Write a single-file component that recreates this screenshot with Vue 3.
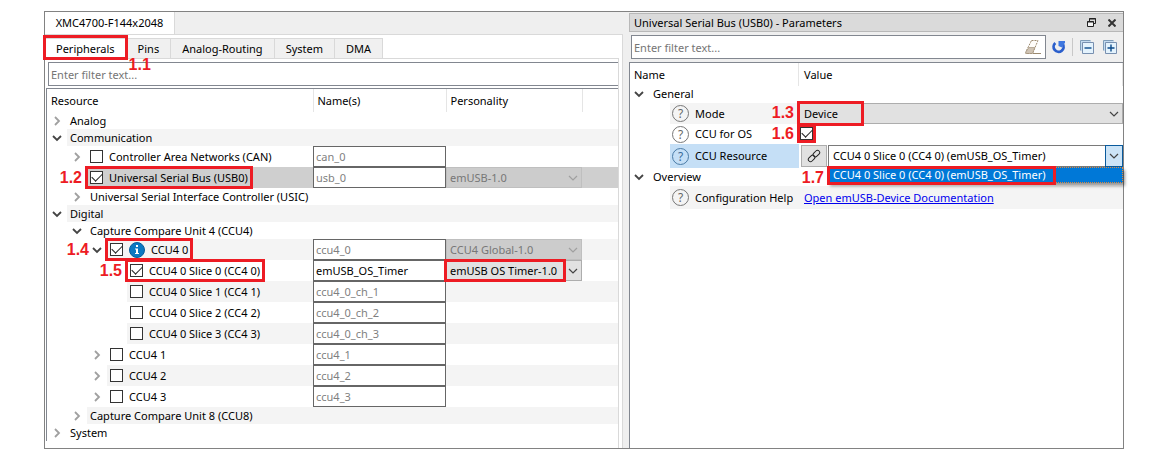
<script setup>
import { reactive } from 'vue'

const tabs = ['Peripherals', 'Pins', 'Analog-Routing', 'System', 'DMA']

const rows = reactive([
  { id: 'analog', label: 'Analog', level: 0, arrow: 'right' },
  { id: 'comm', label: 'Communication', level: 0, arrow: 'down' },
  { id: 'can', label: 'Controller Area Networks (CAN)', level: 1, arrow: 'right', check: true, on: false, name: 'can_0' },
  { id: 'usb', label: 'Universal Serial Bus (USB0)', level: 1, check: true, on: true, name: 'usb_0', personality: 'emUSB-1.0', selected: true, mark: '1.2' },
  { id: 'usic', label: 'Universal Serial Interface Controller (USIC)', level: 1, arrow: 'right' },
  { id: 'digital', label: 'Digital', level: 0, arrow: 'down' },
  { id: 'ccu4', label: 'Capture Compare Unit 4 (CCU4)', level: 1, arrow: 'down' },
  { id: 'ccu40', label: 'CCU4 0', level: 2, arrow: 'down', check: true, on: true, info: true, name: 'ccu4_0', personality: 'CCU4 Global-1.0', mark: '1.4' },
  { id: 'cc40', label: 'CCU4 0 Slice 0 (CC4 0)', level: 3, check: true, on: true, name: 'emUSB_OS_Timer', personality: 'emUSB OS Timer-1.0', enabled: true, mark: '1.5' },
  { id: 'cc41', label: 'CCU4 0 Slice 1 (CC4 1)', level: 3, check: true, on: false, name: 'ccu4_0_ch_1' },
  { id: 'cc42', label: 'CCU4 0 Slice 2 (CC4 2)', level: 3, check: true, on: false, name: 'ccu4_0_ch_2' },
  { id: 'cc43', label: 'CCU4 0 Slice 3 (CC4 3)', level: 3, check: true, on: false, name: 'ccu4_0_ch_3' },
  { id: 'ccu41', label: 'CCU4 1', level: 2, arrow: 'right', check: true, on: false, name: 'ccu4_1' },
  { id: 'ccu42', label: 'CCU4 2', level: 2, arrow: 'right', check: true, on: false, name: 'ccu4_2' },
  { id: 'ccu43', label: 'CCU4 3', level: 2, arrow: 'right', check: true, on: false, name: 'ccu4_3' },
  { id: 'ccu8', label: 'Capture Compare Unit 8 (CCU8)', level: 1, arrow: 'right' },
  { id: 'system', label: 'System', level: 0, arrow: 'right' },
])

const form = reactive({ ccuForOs: true })
const timer = 'CCU4 0 Slice 0 (CC4 0) (emUSB_OS_Timer)'
</script>

<template>
  <main class="page">
    <div class="frame">
      <section class="left">
        <div class="device-bar" role="tablist">
          <button class="device-tab" role="tab" type="button">XMC4700-F144x2048</button>
        </div>
        <div class="left-body">
          <div class="tabs" role="tablist">
            <button
              v-for="(tab, i) in tabs"
              :key="tab"
              type="button"
              role="tab"
              :aria-selected="i === 0"
              :class="['tab', { active: i === 0 }]"
            >
              {{ tab }}
              <span v-if="i === 0" class="mark mark-tab"><b class="num below">1.1</b></span>
            </button>
          </div>
          <div class="tab-page">
            <input class="filter" type="text" placeholder="Enter filter text..." aria-label="Filter resources" />
            <div class="tree">
              <table class="grid">
                <colgroup>
                  <col class="c-res" /><col class="c-name" /><col class="c-pers" /><col />
                </colgroup>
                <thead>
                  <tr><th>Resource</th><th>Name(s)</th><th>Personality</th><th></th></tr>
                </thead>
                <tbody>
                  <tr
                    v-for="(row, i) in rows"
                    :key="row.id"
                    :class="{ tall: row.check, odd: i % 2 === 1, selected: row.selected }"
                  >
                    <td>
                      <div :class="['cell', 'level-' + row.level]">
                        <span class="twisty">
                          <svg v-if="row.arrow === 'right'" width="10" height="10" viewBox="0 0 10 10"><path d="M3 1l4 4-4 4" fill="none" stroke="#a0a0a0" stroke-width="1.8" /></svg>
                          <svg v-if="row.arrow === 'down'" width="10" height="10" viewBox="0 0 10 10"><path d="M1 3l4 4 4-4" fill="none" stroke="#444" stroke-width="1.8" /></svg>
                        </span>
                        <div class="stripe">
                          <label v-if="row.check" class="item">
                            <input v-model="row.on" type="checkbox" />
                            <svg v-if="row.info" class="info" width="16" height="16" viewBox="0 0 16 16">
                              <circle cx="8" cy="8" r="7.5" fill="#0b78c2" stroke="#075c9a" />
                              <path d="M7 3h2v2H7zM6 6.500h3V11h1v1H6v-1h1V7.500H6z" fill="#fff" />
                            </svg>
                            <span>{{ row.label }}</span>
                            <span v-if="row.mark" class="mark mark-row"><b :class="['num', 'before', { clear: row.arrow }]">{{ row.mark }}</b></span>
                          </label>
                          <span v-else>{{ row.label }}</span>
                        </div>
                      </div>
                    </td>
                    <td class="shade">
                      <input v-if="row.name" v-model="row.name" :class="['name', { enabled: row.enabled }]" type="text" :aria-label="row.label + ' name'" />
                    </td>
                    <td class="shade">
                      <div v-if="row.personality" class="combo">
                        <select :disabled="!row.enabled" :aria-label="row.label + ' personality'">
                          <option>{{ row.personality }}</option>
                        </select>
                        <svg class="chev" width="10" height="10" viewBox="0 0 10 10"><path d="M1 3l4 4 4-4" fill="none" :stroke="row.enabled ? '#444' : '#a0a0a0'" stroke-width="1.2" /></svg>
                        <span v-if="row.enabled" class="mark mark-pers"></span>
                      </div>
                    </td>
                    <td class="shade"></td>
                  </tr>
                </tbody>
              </table>
            </div>
          </div>
        </div>
      </section>

      <section class="right">
        <header class="title">
          <span>Universal Serial Bus (USB0) - Parameters</span>
          <div class="title-actions">
            <button type="button" aria-label="Restore">
              <svg width="9" height="9" viewBox="0 0 9 9"><path d="M2.500 3V.500h6V5.500H6.500M2 1h7" fill="none" stroke="#222" /><path d="M.500 3.500h6v5h-6zM0 4h7" fill="#f4f4f4" stroke="#222" /></svg>
            </button>
            <button type="button" aria-label="Close">
              <svg width="8" height="8" viewBox="0 0 8 8"><path d="M.500.500l7 7m0-7l-7 7" stroke="#333" stroke-width="2" /></svg>
            </button>
          </div>
        </header>
        <div class="toolbar">
          <div class="search">
            <input type="text" placeholder="Enter filter text..." aria-label="Filter parameters" />
            <button type="button" aria-label="Clear filter">
              <svg width="16" height="15" viewBox="0 0 16 15"><path d="M6.500.500h6.500L7.500 13.500H1L1 11.500z" fill="#fffdfa" stroke="#9c8a70" stroke-dasharray="2 1" /><path d="M3.800 7.500h6L7.500 13.500H.800V12z" fill="#cfc3b4" stroke="#9c8a70" stroke-width=".6" /><path d="M8 13.500h8" stroke="#9c8a70" /></svg>
            </button>
          </div>
          <button type="button" aria-label="Reset">
            <svg width="14" height="14" viewBox="0 0 14 14"><path d="M3.300 3A5 5 0 1 0 10.800 4" fill="none" stroke="#2b5fcc" stroke-width="2.800" /><path d="M6.500 1h6.500v1.500L10 7.500 6.500 6z" fill="#3f78e0" /></svg>
          </button>
          <span class="sep"></span>
          <button type="button" aria-label="Collapse all">
            <svg width="14" height="14" viewBox="0 0 14 14"><path d="M.500 10.500V.500h10" fill="none" stroke="#7f9db9" /><path d="M1 1h10v2H3v8H1z" fill="#c5dcf0" /><path d="M2.500 2.500h11v11h-11z" fill="#e4f3fd" stroke="#7890b0" /><path d="M4.500 8h7" stroke="#0a4a8a" stroke-width="1.400" /></svg>
          </button>
          <button type="button" aria-label="Expand all">
            <svg width="14" height="14" viewBox="0 0 14 14"><path d="M.500 10.500V.500h10" fill="none" stroke="#7f9db9" /><path d="M1 1h10v2H3v8H1z" fill="#c5dcf0" /><path d="M2.500 2.500h11v11h-11z" fill="#e4f3fd" stroke="#7890b0" /><path d="M4.500 8h7M8 4.500v7" stroke="#0a4a8a" stroke-width="1.400" /></svg>
          </button>
        </div>

        <div class="params">
          <div class="p-head"><span>Name</span><span>Value</span></div>

          <div class="group">
            <svg width="10" height="10" viewBox="0 0 10 10"><path d="M1 3l4 4 4-4" fill="none" stroke="#444" stroke-width="1.8" /></svg>
            <span>General</span>
          </div>
          <div class="prop shaded h21">
            <label class="p-name" for="mode"><i class="help">?</i>Mode</label>
            <div class="combo">
              <select id="mode"><option>Device</option></select>
              <svg class="chev" width="10" height="10" viewBox="0 0 10 10"><path d="M1 3l4 4 4-4" fill="none" stroke="#444" stroke-width="1.2" /></svg>
              <span class="mark mark-mode"><b class="num before">1.3</b></span>
            </div>
          </div>
          <div class="prop h20">
            <label class="p-name" for="os"><i class="help">?</i>CCU for OS</label>
            <div class="p-check">
              <input id="os" v-model="form.ccuForOs" type="checkbox" />
              <span class="mark mark-check"><b class="num before">1.6</b></span>
            </div>
          </div>
          <div class="prop current h24">
            <label class="p-name" for="res"><i class="help">?</i>CCU Resource</label>
            <div class="resource">
              <button class="link" type="button" aria-label="Go to resource">
                <svg width="14" height="14" viewBox="0 0 14 14"><g fill="none" stroke="#222"><rect x="-3.700" y="-2.200" width="7.400" height="4.400" rx="2.200" transform="translate(9.400 4.600) rotate(-45)" /><rect x="-3.700" y="-2.200" width="7.400" height="4.400" rx="2.200" transform="translate(4.600 9.400) rotate(-45)" /></g></svg>
              </button>
              <div class="combo open">
                <select id="res"><option>{{ timer }}</option></select>
                <span class="drop"><svg width="10" height="10" viewBox="0 0 10 10"><path d="M1 3l4 4 4-4" fill="none" stroke="#444" stroke-width="1.2" /></svg></span>
                <div class="popup" role="listbox" aria-label="CCU Resource options">
                  <div class="option" role="option" aria-selected="true">
                    <span class="option-text">{{ timer }}<span class="mark mark-option"><b class="num before">1.7</b></span></span>
                  </div>
                </div>
              </div>
            </div>
          </div>
          <div class="group">
            <svg width="10" height="10" viewBox="0 0 10 10"><path d="M1 3l4 4 4-4" fill="none" stroke="#444" stroke-width="1.8" /></svg>
            <span>Overview</span>
          </div>
          <div class="prop shaded full h23">
            <span class="p-name"><i class="help">?</i>Configuration Help</span>
            <a class="doc" href="#">Open emUSB-Device Documentation</a>
          </div>
        </div>
      </section>
    </div>
  </main>
</template>

<style>
body { background: #fff; }
</style>

<style scoped>
* { box-sizing: border-box; }
.page {
  padding: 11px 44px 12px;
  font: 11px/16px "Noto Sans", "Segoe UI", sans-serif;
  color: #000;
}
button, input, select { font: inherit; color: inherit; margin: 0; border-radius: 0; }
button { border: 0; background: none; padding: 0; }
svg { display: block; flex: none; }
.frame {
  display: grid;
  grid-template-columns: 578fr 494fr;
  gap: 6px;
  border: 1px solid #828282;
  background: #efefef;
}

/* Left view */
.left { display: flex; flex-direction: column; min-width: 0; }
.device-bar { display: flex; height: 22px; }
.device-tab {
  width: 130px;
  background: #fff;
  border-right: 1px solid #d9d9d9;
}
.left-body {
  flex: 1;
  background: #fff;
  border: solid #d9d9d9;
  border-width: 1px 1px 0 0;
  padding: 3px 3px 0 0;
}
.tabs { display: flex; height: 20px; }
.tab {
  position: relative;
  padding: 0 11px;
  background: #f0f0f0;
  border: solid #d9d9d9;
  border-width: 1px 1px 0 0;
  line-height: 18px;
  white-space: nowrap;
}
.tab.active { background: #fff; z-index: 2; }
.tab-page { border-top: 1px solid #d9d9d9; border-right: 1px solid #d9d9d9; padding: 3px 0 7px 1px; }
.filter {
  display: block;
  width: calc(100% - 2px);
  height: 24px;
  margin: 0 0 2px 2px;
  padding: 0 2px;
  border: 1px solid #828790;
  border-right: 0;
  background: #fff;
}
::placeholder { color: #757575; opacity: 1; }
.tree { border: solid #828790; border-width: 1px 0 0 1px; }
.grid { width: 100%; table-layout: fixed; border-collapse: collapse; }
.c-res { width: 266px; }
.c-name { width: 133px; }
.c-pers { width: 136px; }
.grid th {
  height: 23px;
  padding: 0 0 0 4px;
  text-align: left;
  font-weight: 400;
  border-right: 1px solid #e5e5e5;
}
.grid th:last-child { border-right: 0; }
.grid td { height: 17px; padding: 0; }
.grid .tall td { height: 21px; }
.cell { display: flex; height: 17px; white-space: nowrap; }
.tall .cell, .tall .stripe { height: 21px; }
.level-1 { padding-left: 20px; }
.level-2 { padding-left: 40px; }
.level-3 { padding-left: 60px; }
.twisty { width: 20px; display: flex; align-items: center; justify-content: center; }
.stripe { flex: 1; min-width: 0; height: 17px; padding-left: 3px; display: flex; align-items: center; }
.odd .stripe, .odd .shade { background: #f4f4f4; }
.selected .stripe, .selected .shade { background: #cfcfcf; }
.item { position: relative; display: flex; align-items: center; gap: 6px; height: 21px; }

input[type="checkbox"] {
  appearance: none;
  width: 13px;
  height: 13px;
  flex: none;
  border: 1px solid #333;
  background: #fff;
  display: grid;
  place-items: center;
}
input[type="checkbox"]:checked::after {
  content: "";
  width: 9px;
  height: 5px;
  margin-bottom: 3px;
  border: solid #222;
  border-width: 0 0 1px 1px;
  transform: rotate(-45deg);
}
.name {
  display: block;
  width: 100%;
  height: 21px;
  padding: 0 2px;
  border: 1px solid #666;
  background: #fff;
  color: #7f7f7f;
}
.name.enabled { color: #000; }

.combo { position: relative; height: 21px; }
.combo select {
  appearance: none;
  display: block;
  width: 100%;
  height: 100%;
  padding: 0 18px 0 4px;
  border: 1px solid #adadad;
  background: #e1e1e1;
}
.grid .combo select { padding-left: 3px; }
.combo select:disabled { background: #ccc; border-color: #bfbfbf; color: #777; opacity: 1; }
.chev { position: absolute; right: 4px; top: 6px; pointer-events: none; }

/* Callouts */
.mark { position: absolute; border: 3px solid #ed1c24; pointer-events: none; z-index: 3; }
.num { position: absolute; font: bold 16px/18px "Liberation Sans", Arial, sans-serif; color: #ed1c24; }
.num.before { right: 100%; top: 0; margin-right: 6px; }
.num.clear { margin-right: 19px; }
.num.below { left: 100%; top: 100%; margin-top: -1px; margin-left: 4px; }
.mark-tab { inset: -4px -2px -2px -2px; }
.mark-row { inset: -1px -5px -1px -5px; }
.mark-pers { inset: -1px 16px -1px -2px; }
.mark-mode { left: -2px; top: -2px; width: 67px; height: 25px; }
.mark-check { left: -2px; top: 0; width: 19px; height: 19px; }
.mark-check .num { top: -2px; }
.mark-option { inset: -2px -10px -3px -6px; }

/* Right view */
.right { min-width: 0; display: flex; flex-direction: column; }
.title {
  display: flex;
  align-items: center;
  height: 19px;
  margin-top: 1px;
  padding: 0 7px 0 4px;
  border: 1px solid #b8b8b8;
  border-right: 0;
  background: #dadada;
}
.title-actions { display: flex; align-items: center; gap: 12px; margin-left: auto; }
.toolbar { display: flex; align-items: center; gap: 9px; height: 30px; padding: 0 6px 0 2px; }
.search {
  flex: 1;
  display: flex;
  align-items: center;
  height: 24px;
  margin-right: -3px;
  padding-right: 4px;
  border: 1px solid #828790;
  background: #fff;
}
.search input { flex: 1; min-width: 0; height: 20px; border: 0; padding: 0 2px; outline: 0; background: none; }
.sep { width: 1px; height: 18px; background: #c8c8c8; margin: 0 -2px 0 -3px; }
.params { flex: 1; background: #fff; border: solid #828790; border-width: 1px 0 0 1px; }
.p-head { display: grid; grid-template-columns: 169px 1fr; height: 22px; line-height: 23px; }
.p-head span { padding-left: 4px; border-right: 1px solid #e5e5e5; }
.p-head span + span { padding-left: 5px; }
.group { display: flex; align-items: center; gap: 9px; height: 18px; padding-left: 4px; }
.prop { display: grid; grid-template-columns: 129px 1fr; padding-left: 40px; }
.h20 { height: 20px; }
.h21 { height: 21px; }
.h23 { height: 23px; }
.h24 { height: 24px; }
.p-name { display: flex; align-items: center; gap: 6px; padding-left: 2px; white-space: nowrap; }
.shaded .p-name, .full .doc { background: #f4f4f4; }
.current .p-name { background: #c5dff6; }
.help {
  width: 17px;
  height: 17px;
  flex: none;
  border: 1px solid #777;
  border-radius: 50%;
  color: #666;
  font-size: 12px;
  font-style: normal;
  line-height: 15px;
  text-align: center;
}
.current .help { border-color: #4a7ba6; color: #3a6a98; }
.p-check { position: relative; padding: 3px 0 0 1px; }
.resource { display: flex; gap: 1px; padding: 1px 0 1px 2px; }
.link { width: 26px; border: 1px solid #adadad; background: #e1e1e1; display: grid; place-items: center; }
.combo.open { flex: 1; height: 22px; }
.open select { background: #fff; border-color: #7a7a7a; }
.drop {
  position: absolute;
  inset: 0 0 0 auto;
  width: 18px;
  border: 1px solid #0a5a9c;
  background: #cce4f7;
  display: grid;
  place-items: center;
  pointer-events: none;
}
.popup {
  position: absolute;
  left: 0;
  right: 0;
  top: 100%;
  z-index: 2;
  background: #0078d7;
  color: #fff;
  box-shadow: 2px 3px 3px rgba(0, 0, 0, .4);
}
.option { height: 16px; padding-left: 4px; border: 1px dotted #e08a3c; line-height: 14px; }
.option-text { position: relative; display: inline-block; height: 14px; white-space: nowrap; }
.doc { display: flex; align-items: center; padding-left: 5px; color: #00e; text-decoration: underline; }
</style>
